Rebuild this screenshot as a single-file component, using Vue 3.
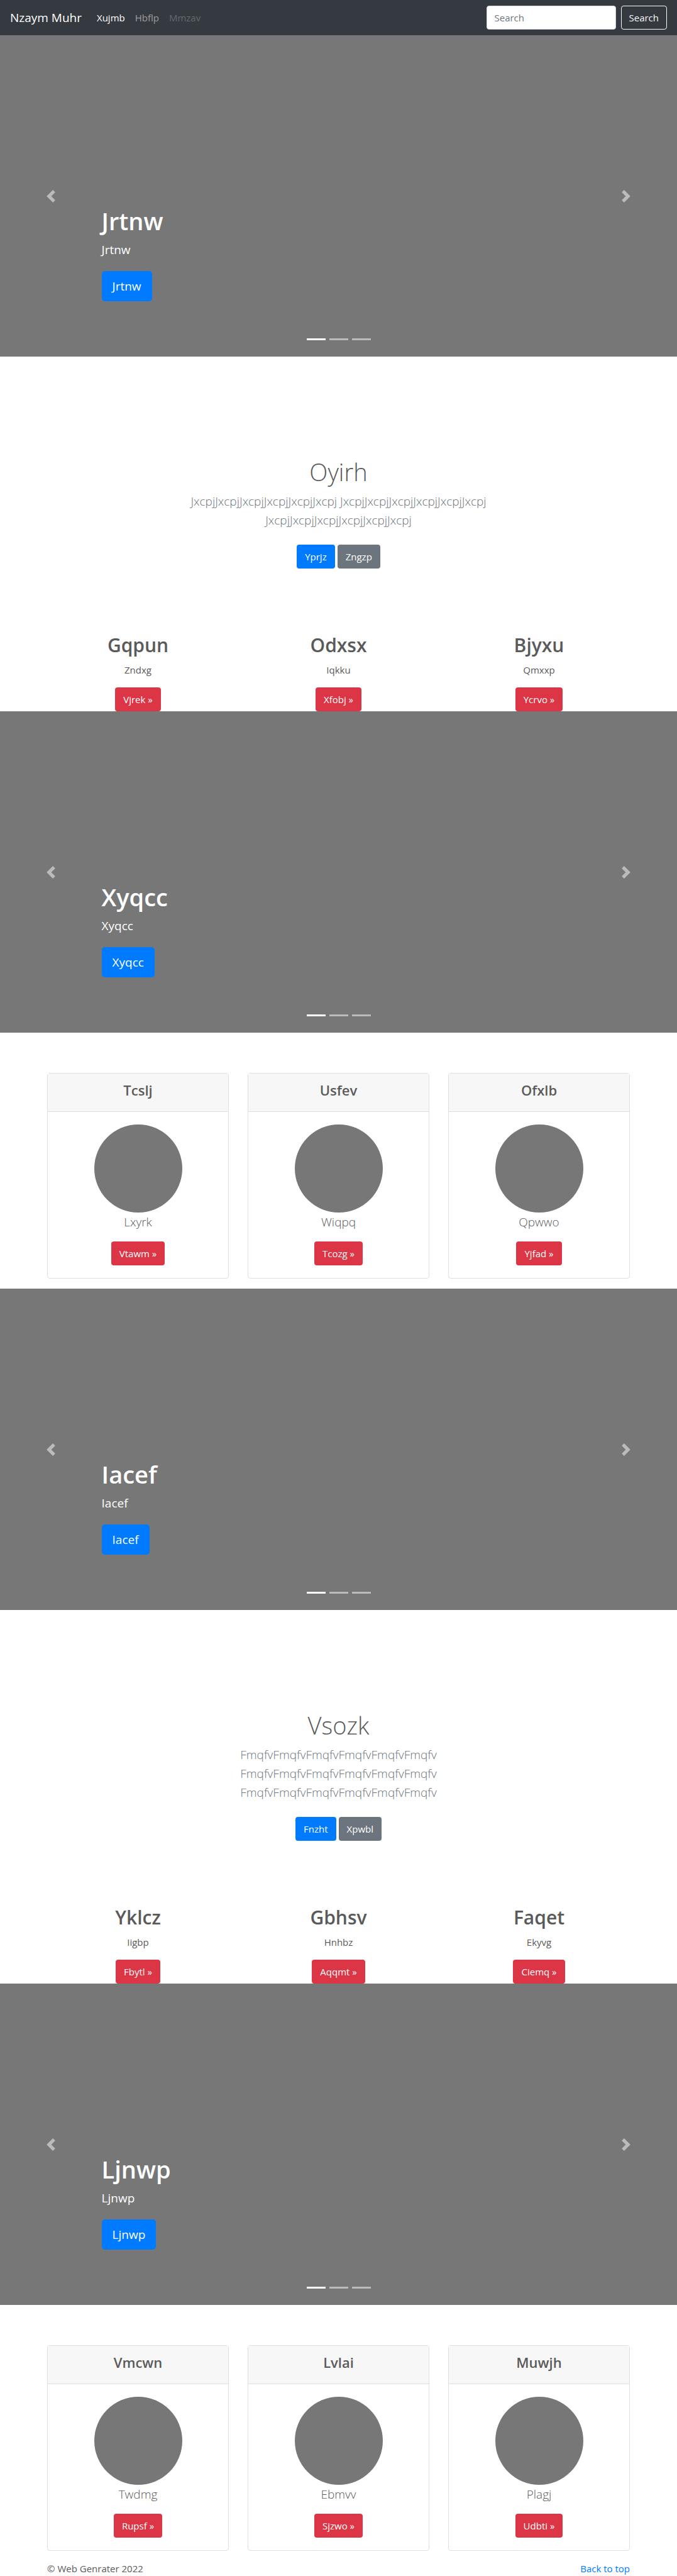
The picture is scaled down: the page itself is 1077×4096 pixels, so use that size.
<script setup>
import { ref } from 'vue'

const query = ref('')

const sections = [
  {
    hero: 'Jrtnw',
    intro: {
      title: 'Oyirh',
      text: 'JxcpjJxcpjJxcpjJxcpjJxcpjJxcpj JxcpjJxcpjJxcpjJxcpjJxcpjJxcpj JxcpjJxcpjJxcpjJxcpjJxcpjJxcpj',
      primary: 'Yprjz',
      secondary: 'Zngzp',
    },
    features: [
      { title: 'Gqpun', text: 'Zndxg', action: 'Vjrek' },
      { title: 'Odxsx', text: 'Iqkku', action: 'Xfobj' },
      { title: 'Bjyxu', text: 'Qmxxp', action: 'Ycrvo' },
    ],
  },
  {
    hero: 'Xyqcc',
    cards: [
      { title: 'Tcslj', text: 'Lxyrk', action: 'Vtawm' },
      { title: 'Usfev', text: 'Wiqpq', action: 'Tcozg' },
      { title: 'Ofxlb', text: 'Qpwwo', action: 'Yjfad' },
    ],
  },
  {
    hero: 'Iacef',
    intro: {
      title: 'Vsozk',
      text: 'FmqfvFmqfvFmqfvFmqfvFmqfvFmqfv FmqfvFmqfvFmqfvFmqfvFmqfvFmqfv FmqfvFmqfvFmqfvFmqfvFmqfvFmqfv',
      primary: 'Fnzht',
      secondary: 'Xpwbl',
    },
    features: [
      { title: 'Yklcz', text: 'Iigbp', action: 'Fbytl' },
      { title: 'Gbhsv', text: 'Hnhbz', action: 'Aqqmt' },
      { title: 'Faqet', text: 'Ekyvg', action: 'Ciemq' },
    ],
  },
  {
    hero: 'Ljnwp',
    cards: [
      { title: 'Vmcwn', text: 'Twdmg', action: 'Rupsf' },
      { title: 'Lvlai', text: 'Ebmvv', action: 'Sjzwo' },
      { title: 'Muwjh', text: 'Plagj', action: 'Udbti' },
    ],
  },
]
</script>

<template>
  <div class="page">
    <header class="navbar">
      <a class="brand" href="#">Nzaym Muhr</a>
      <nav class="links">
        <a class="link active" href="#">Xujmb</a>
        <a class="link" href="#">Hbflp</a>
        <a class="link disabled" href="#" aria-disabled="true">Mmzav</a>
      </nav>
      <form class="search" @submit.prevent>
        <input v-model="query" class="search-input" type="search" placeholder="Search" aria-label="Search" />
        <button class="btn btn-outline" type="submit">Search</button>
      </form>
    </header>

    <main>
      <template v-for="section in sections" :key="section.hero">
        <section class="carousel">
          <button class="control" type="button" aria-label="Previous">
            <svg class="chevron" viewBox="0 0 8 8" aria-hidden="true">
              <path d="M5.25 0l-4 4 4 4 1.5-1.5L4.25 4l2.5-2.5L5.25 0z" />
            </svg>
          </button>
          <div class="slide">
            <div class="caption">
              <h1>{{ section.hero }}</h1>
              <p>{{ section.hero }}</p>
              <a class="btn btn-lg btn-primary" href="#">{{ section.hero }}</a>
            </div>
            <div class="indicators">
              <span class="indicator current"></span>
              <span class="indicator"></span>
              <span class="indicator"></span>
            </div>
          </div>
          <button class="control" type="button" aria-label="Next">
            <svg class="chevron" viewBox="0 0 8 8" aria-hidden="true">
              <path d="M2.75 0l-1.5 1.5L3.75 4l-2.5 2.5L2.75 8l4-4-4-4z" />
            </svg>
          </button>
        </section>

        <section v-if="section.intro" class="intro">
          <h1>{{ section.intro.title }}</h1>
          <p class="lead">{{ section.intro.text }}</p>
          <div class="actions">
            <a class="btn btn-primary" href="#">{{ section.intro.primary }}</a>
            <a class="btn btn-secondary" href="#">{{ section.intro.secondary }}</a>
          </div>
        </section>

        <section v-if="section.features" class="container columns">
          <article v-for="item in section.features" :key="item.title" class="feature">
            <h2>{{ item.title }}</h2>
            <p>{{ item.text }}</p>
            <a class="btn btn-danger" href="#">{{ item.action }} »</a>
          </article>
        </section>

        <section v-if="section.cards" class="container columns cards">
          <article v-for="card in section.cards" :key="card.title" class="card">
            <h4 class="card-header">{{ card.title }}</h4>
            <div class="card-body">
              <div class="avatar"></div>
              <p class="card-text">{{ card.text }}</p>
              <a class="btn btn-danger" href="#">{{ card.action }} »</a>
            </div>
          </article>
        </section>
      </template>
    </main>

    <footer class="container footer">
      <span>© Web Genrater 2022</span>
      <a href="#">Back to top</a>
    </footer>
  </div>
</template>

<style>
body {
  margin: 0;
  background: #fff;
}
</style>

<style scoped>
.page,
.page * {
  box-sizing: border-box;
}

.page {
  font-family: "Open Sans", "Noto Sans", sans-serif;
  font-size: 15px;
  line-height: 24px;
  color: #5a5a5a;
}

h1,
h2,
h4,
p {
  margin: 0;
}

a {
  color: #007bff;
  text-decoration: none;
}

.container {
  width: 100%;
  max-width: 957px;
  margin: 0 auto;
  padding: 0 15px;
}

.navbar {
  display: flex;
  align-items: center;
  height: 56px;
  padding: 0 16px;
  background: #343a40;
}

.brand {
  margin-right: 16px;
  font-size: 19px;
  line-height: 30px;
  color: #fff;
}

.links {
  display: flex;
  flex: 1;
}

.link {
  padding: 0 8px;
  color: rgba(255, 255, 255, 0.5);
}

.link.active {
  color: #fff;
}

.link.disabled {
  color: rgba(255, 255, 255, 0.25);
}

.search {
  display: flex;
  gap: 8px;
}

.search-input {
  width: 206px;
  height: 38px;
  padding: 6px 12px;
  border: 1px solid #ced4da;
  border-radius: 4px;
  background: #fff;
  font: inherit;
  color: #495057;
  appearance: none;
}

.search-input::placeholder {
  color: #6c757d;
  opacity: 1;
}

.btn {
  display: inline-block;
  padding: 6px 12px;
  border: 1px solid transparent;
  border-radius: 4px;
  font: inherit;
  color: #fff;
  text-align: center;
  white-space: nowrap;
  cursor: pointer;
}

.btn-outline {
  border-color: #f8f9fa;
  background: transparent;
  color: #f8f9fa;
}

.btn-primary {
  background: #007bff;
}

.btn-secondary {
  background: #6c757d;
}

.btn-danger {
  background: #dc3545;
}

.btn-lg {
  padding: 8px 16px;
  border-radius: 5px;
  font-size: 19px;
  line-height: 30px;
}

.carousel {
  display: flex;
  height: 511px;
  background: #777;
  color: #fff;
}

.control {
  display: flex;
  flex: 0 0 15%;
  align-items: center;
  justify-content: center;
  padding: 0;
  border: 0;
  background: transparent;
  opacity: 0.5;
  cursor: pointer;
}

.chevron {
  width: 20px;
  height: 20px;
  fill: #fff;
}

.slide {
  display: flex;
  flex: 1;
  flex-direction: column;
  justify-content: flex-end;
}

.caption h1 {
  margin-bottom: 8px;
  font-size: 38px;
  font-weight: 600;
  line-height: 48px;
}

.caption p {
  margin-bottom: 20px;
  font-size: 19px;
  line-height: 28px;
}

.indicators {
  display: flex;
  gap: 6px;
  justify-content: center;
  padding: 59px 0 26px;
}

.indicator {
  width: 30px;
  height: 3px;
  background: rgba(255, 255, 255, 0.5);
}

.indicator.current {
  background: #fff;
}

.intro {
  padding: 159px 15px 103px;
  text-align: center;
}

.intro h1 {
  margin-bottom: 8px;
  font-size: 38px;
  font-weight: 300;
  line-height: 48px;
}

.lead {
  max-width: 560px;
  margin: 0 auto 24px;
  font-size: 19px;
  font-weight: 300;
  line-height: 30px;
  color: #6c757d;
}

.actions {
  display: flex;
  gap: 4px;
  justify-content: center;
}

.columns {
  display: grid;
  grid-template-columns: repeat(3, 1fr);
  gap: 30px;
  text-align: center;
}

.feature {
  display: flex;
  flex-direction: column;
  align-items: center;
}

.feature h2 {
  margin-bottom: 8px;
  font-size: 30px;
  font-weight: 600;
  line-height: 38px;
}

.feature p {
  margin-bottom: 16px;
}

.cards {
  margin-top: 64px;
  margin-bottom: 16px;
}

.card {
  border: 1px solid #dfdfdf;
  border-radius: 4px;
}

.card-header {
  padding: 12px 20px 19px;
  border-bottom: 1px solid #dfdfdf;
  background: #f7f7f7;
  font-size: 22px;
  font-weight: 600;
  line-height: 29px;
}

.card-body {
  display: flex;
  flex-direction: column;
  align-items: center;
  padding: 20px;
}

.avatar {
  width: 140px;
  height: 140px;
  border-radius: 50%;
  background: #777;
}

.card-text {
  margin-bottom: 16px;
  font-size: 19px;
  font-weight: 300;
  line-height: 30px;
}

.footer {
  display: flex;
  justify-content: space-between;
}
</style>
